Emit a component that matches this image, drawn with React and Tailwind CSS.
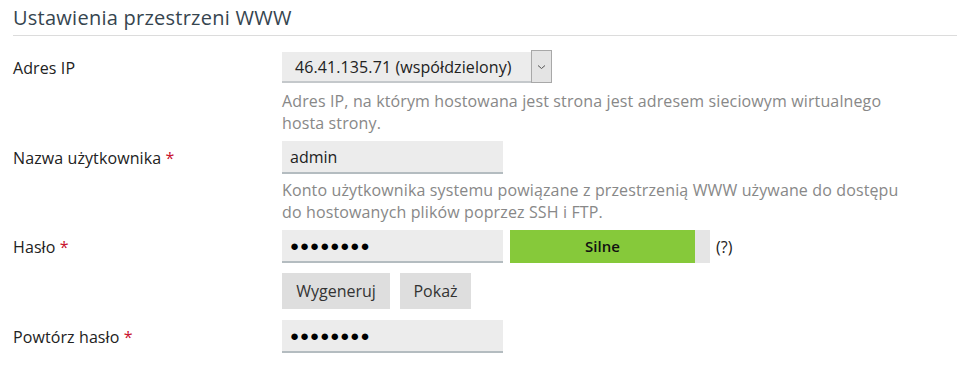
const Label = ({ text, required }) => (
  <div className="w-[269px] shrink-0 text-[16px] tracking-[0.1px] text-[#222]">
    {text}
    {required && <span className="text-[#c8102e]"> *</span>}
  </div>
);

const Hint = ({ children }) => (
  <p className="w-[630px] text-[16px] leading-[22px] tracking-[0.13px] text-[#888]">{children}</p>
);

const App = () => {
  return (
    <div className="w-[957px] h-[370px] bg-white pl-[13px] font-['Open_Sans',sans-serif]">
      <h2 className="pt-[3px] pb-[2px] text-[20px] leading-[30px] tracking-[0.25px] text-[#36454f] border-b border-[#dcdcdc]">
        Ustawienia przestrzeni WWW
      </h2>

      {/* Adres IP */}
      <div className="flex items-start mt-[16px]">
        <div className="h-[31px] flex items-center">
          <Label text="Adres IP" />
        </div>
        <div>
          <div className="flex h-[31px] w-[270px] bg-[#ececec] border-b-2 border-[#c4c8cb]">
            <div className="flex-1 px-[13px] flex items-center text-[16px] tracking-[0.1px] text-[#222]">
              46.41.135.71 (współdzielony)
            </div>
            <div className="w-[21px] h-[33px] -mt-[2px] border border-[#a8a8a8] bg-[#e4e4e4] flex items-center justify-center">
              <svg width="9" height="6" viewBox="0 0 9 6" fill="none">
                <path d="M1 1.5l3.5 3 3.5-3" stroke="#555" strokeWidth="1" />
              </svg>
            </div>
          </div>
          <div className="mt-[7px]">
            <Hint>
              Adres IP, na którym hostowana jest strona jest adresem sieciowym wirtualnego hosta strony.
            </Hint>
          </div>
        </div>
      </div>

      {/* Nazwa użytkownika */}
      <div className="flex items-start mt-[7px]">
        <div className="h-[33px] flex items-center">
          <Label text="Nazwa użytkownika" required />
        </div>
        <div>
          <div className="h-[33px] w-[221px] bg-[#ececec] border-b-2 border-[#b4bcc0] px-[8px] flex items-center text-[16px] text-[#222]">
            admin
          </div>
          <div className="mt-[5px]">
            <Hint>
              Konto użytkownika systemu powiązane z przestrzenią WWW używane do dostępu do hostowanych plików poprzez SSH i FTP.
            </Hint>
          </div>
        </div>
      </div>

      {/* Hasło */}
      <div className="flex items-start mt-[7px]">
        <div className="h-[33px] flex items-center">
          <Label text="Hasło" required />
        </div>
        <div>
          <div className="flex items-center">
            <div className="h-[33px] w-[221px] bg-[#ececec] border-b-2 border-[#b4bcc0] px-[8px] flex items-center text-[15px] text-black tracking-[1px]">
              ●●●●●●●●
            </div>
            <div className="ml-[7px] flex h-[33px] w-[200px] bg-[#e5e5e5]">
              <div className="w-[185px] bg-[#86c93a] flex items-center justify-center text-[15px] font-semibold text-[#111]">
                Silne
              </div>
            </div>
            <span className="ml-[6px] text-[16px] text-[#222]">(?)</span>
          </div>
          <div className="flex gap-[10px] mt-[10px]">
            <button className="h-[36px] w-[108px] bg-[#dedede] text-[16px] text-[#333]">Wygeneruj</button>
            <button className="h-[36px] w-[71px] bg-[#dedede] text-[16px] text-[#333]">Pokaż</button>
          </div>
        </div>
      </div>

      {/* Powtórz hasło */}
      <div className="flex items-start mt-[11px]">
        <div className="h-[33px] flex items-center">
          <Label text="Powtórz hasło" required />
        </div>
        <div className="h-[33px] w-[221px] bg-[#ececec] border-b-2 border-[#b4bcc0] px-[8px] flex items-center text-[15px] text-black tracking-[1px]">
          ●●●●●●●●
        </div>
      </div>
    </div>
  );
};

export default App;
